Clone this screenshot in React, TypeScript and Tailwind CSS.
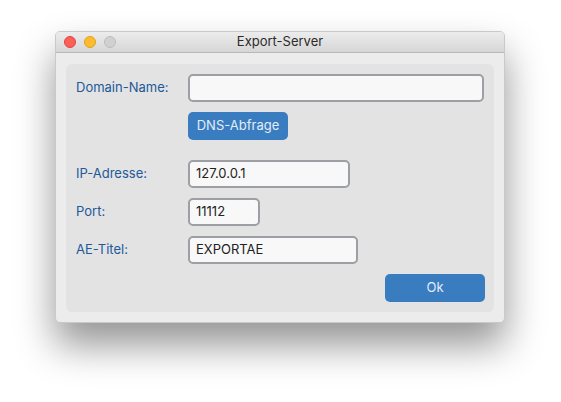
import React from "react";

const font = { fontFamily: "Inter, 'Open Sans', sans-serif" };

function Field({ label, value, width }: { label: string; value: string; width: string }) {
  return (
    <div className="flex items-center h-[28px]">
      <span className="w-[112px] text-[13px] text-[#22599a]">{label}</span>
      <div
        className={`${width} h-[28px] rounded-[5px] border-2 border-[#9c9fa3] bg-[#f8f8f8] px-[6px] flex items-center text-[13px] text-[#222]`}
      >
        {value}
      </div>
    </div>
  );
}

export default function App() {
  return (
    <div className="w-[561px] h-[402px] bg-white pl-[55px] pt-[31px]" style={font}>
      <div className="w-[450px] h-[292px] rounded-[5px] bg-[#ececec] border border-[#c9c9c9] shadow-[0_22px_38px_rgba(0,0,0,0.42)] flex flex-col overflow-hidden">
        {/* title bar */}
        <div className="h-[21px] flex items-center px-[8px] bg-gradient-to-b from-[#ececec] to-[#d6d6d6] border-b border-[#b8b8b8]">
          <div className="flex gap-[8px]">
            <span className="w-[12px] h-[12px] rounded-full bg-[#fc5f57] border border-[#e0443e]" />
            <span className="w-[12px] h-[12px] rounded-full bg-[#fdbc2e] border border-[#dea123]" />
            <span className="w-[12px] h-[12px] rounded-full bg-[#d0d0d0] border border-[#bdbdbd]" />
          </div>
          <span className="flex-1 text-center text-[13px] text-[#2b2b2b] mr-[52px]">Export-Server</span>
        </div>

        {/* content panel */}
        <div className="m-[10px] mt-[11px] flex-1 rounded-[6px] bg-[#e3e3e3] pl-[10px] pr-[9px] pt-[10px] flex flex-col">
          <Field label="Domain-Name:" value="" width="w-[296px]" />
          <div className="pl-[112px] mt-[10px]">
            <button className="w-[100px] h-[28px] rounded-[5px] bg-[#3a7cc0] text-[13px] text-[#e3edf8]">
              DNS-Abfrage
            </button>
          </div>
          <div className="mt-[20px] flex flex-col gap-[10px]">
            <Field label="IP-Adresse:" value="127.0.0.1" width="w-[162px]" />
            <Field label="Port:" value="11112" width="w-[72px]" />
            <Field label="AE-Titel:" value="EXPORTAE" width="w-[170px]" />
          </div>
          <div className="flex justify-end mt-[10px]">
            <button className="w-[100px] h-[28px] rounded-[5px] bg-[#3a7cc0] text-[13px] text-[#e3edf8]">
              Ok
            </button>
          </div>
        </div>
      </div>
    </div>
  );
}
